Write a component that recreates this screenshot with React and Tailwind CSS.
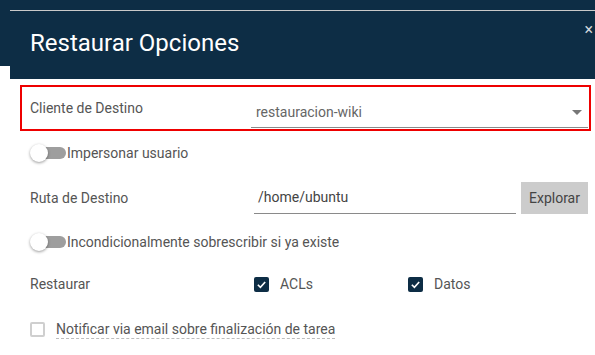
import React from "react";

const txt = "text-[14px] text-[#555]";

const Toggle = ({ label }) => (
  <div className="flex items-center h-[20px]">
    <div className="relative w-[37px] h-[20px] flex items-center">
      <span className="absolute left-[10px] w-[26px] h-[12px] rounded-r-full bg-[#9e9e9e]" />
      <span className="relative w-[18px] h-[18px] rounded-full bg-white shadow-[0_1px_3px_rgba(0,0,0,0.4)]" />
    </div>
    <span className={txt}>{label}</span>
  </div>
);

const Checked = ({ label }) => (
  <div className="flex items-center gap-[11px]">
    <span className="w-[15px] h-[15px] rounded-[2px] bg-[#0d2d45] flex items-center justify-center">
      <svg width="11" height="11" viewBox="0 0 12 12">
        <path d="M2 6.3 L4.8 9 L10 3.2" fill="none" stroke="white" strokeWidth="1.8" />
      </svg>
    </span>
    <span className={txt}>{label}</span>
  </div>
);

export default function App() {
  return (
    <div className="relative w-[595px] h-[355px] overflow-hidden bg-white font-['Roboto',sans-serif]">
      {/* backdrop */}
      <div className="absolute top-0 inset-x-0 h-[66px] bg-[#0d2d45]" />

      <div className="relative mt-[10px] ml-[10px]">
        {/* header */}
        <div className="relative border-t border-[#c9c9c9] h-[69px] bg-[#0d2d45] pl-[20px] pt-[17px]">
          <h2 className="text-white text-[24px] leading-[30px] m-0">Restaurar Opciones</h2>
          <span className="absolute right-[2px] top-[11px] text-[#d0d5da] text-[16px] leading-none">×</span>
        </div>

        <div className="pl-[10px] pr-[4px] pt-[6px]">
          {/* client select */}
          <div className="flex items-center h-[46px] border-2 border-[#ee0000] pl-[8px]">
            <span className={`w-[221px] ${txt}`}>Cliente de Destino</span>
            <div className="flex-1 mr-[1px] h-[30px] mt-[10px] border-b border-[#8a8a8a] flex items-center justify-between pl-[5px] pr-[6px]">
              <span className="text-[14px] text-[#666]">restauracion-wiki</span>
              <svg width="10" height="5" viewBox="0 0 10 5">
                <path d="M0 0 L10 0 L5 5 Z" fill="#777" />
              </svg>
            </div>
          </div>

          <div className="pl-[10px] mt-[12px]">
            <Toggle label="Impersonar usuario" />
          </div>

          {/* destination path */}
          <div className="flex items-center mt-[18px] h-[34px] pl-[10px]">
            <span className={`w-[224px] ${txt}`}>Ruta de Destino</span>
            <div className="w-[262px] h-[32px] border-b border-[#8a8a8a] flex items-center pl-[4px]">
              <span className="text-[14px] text-[#444]">/home/ubuntu</span>
            </div>
            <button className="ml-[5px] w-[67px] h-[32px] bg-[#cccccc] text-[14px] text-[#444]">Explorar</button>
          </div>

          <div className="pl-[10px] mt-[17px]">
            <Toggle label="Incondicionalmente sobrescribir si ya existe" />
          </div>

          {/* restore */}
          <div className="flex items-center mt-[22px] h-[20px] pl-[10px]">
            <span className={`w-[224px] ${txt}`}>Restaurar</span>
            <div className="w-[154px]">
              <Checked label="ACLs" />
            </div>
            <Checked label="Datos" />
          </div>

          {/* notify */}
          <div className="flex items-center mt-[26px] pl-[10px] gap-[11px]">
            <span className="w-[15px] h-[15px] rounded-[2px] border-2 border-[#cfcfcf] bg-white" />
            <span className={`${txt} border-b border-dashed border-[#bdbdbd] leading-[18px]`}>
              Notificar via email sobre finalización de tarea
            </span>
          </div>
        </div>
      </div>
    </div>
  );
}
